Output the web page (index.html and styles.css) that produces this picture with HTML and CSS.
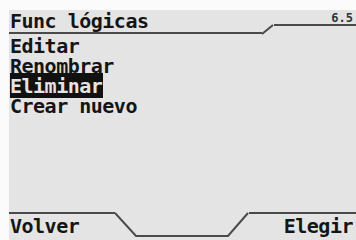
FILE: index.html
```html
<!DOCTYPE html>
<html lang="es">
<head>
    <meta charset="UTF-8">
    <title>Func lógicas</title>
    <link rel="stylesheet" href="styles.css">
</head>
<body>
    <div class="screen">
        <header class="topbar">
            <span class="title">Func lógicas</span>
            <svg class="slant" width="12" height="25" viewBox="0 0 12 25">
                <path d="M0 24 L11 15" stroke="#4a4a4a" stroke-width="2" fill="none"/>
            </svg>
            <span class="version">6.5</span>
        </header>

        <ul class="menu">
            <li>Editar</li>
            <li>Renombrar</li>
            <li><span class="selected">Eliminar</span></li>
            <li>Crear nuevo</li>
        </ul>

        <footer class="softkeys">
            <span class="key key-left">Volver</span>
            <svg class="dip" width="134" height="26" viewBox="0 0 134 26">
                <path d="M0 1 L21 24 L113 24 L133 1" stroke="#4a4a4a" stroke-width="2" fill="none"/>
            </svg>
            <span class="key key-right">Elegir</span>
        </footer>
    </div>
</body>
</html>
```

FILE: styles.css
```css
body {
    margin: 0;
    background-color: #fbfbfb;
    font-family: "DejaVu Sans Mono", monospace;
    font-weight: bold;
    color: #151515;
}
.screen {
    margin: 10px 0 0 9px;
    height: 230px;
    background-color: #e4e4e4;
    display: flex;
    flex-direction: column;
    overflow: hidden;
}
.topbar {
    display: flex;
    align-items: flex-start;
    height: 25px;
}
.title {
    flex: 0 0 252px;
    font-size: 20px;
    letter-spacing: -0.5px;
    line-height: 22px;
    padding-left: 1px;
    border-bottom: 2px solid #4a4a4a;
    white-space: nowrap;
}
.slant {
    flex: none;
    display: block;
}
.version {
    flex: 1;
    font-size: 12px;
    line-height: 12px;
    padding: 2px 3px 0 0;
    text-align: right;
    border-bottom: 2px solid #4a4a4a;
    color: #333;
}
.menu {
    list-style: none;
    margin: 0;
    padding: 1px 0 0 1px;
    font-size: 20px;
    letter-spacing: -0.5px;
    line-height: 20px;
    flex: 1;
}
.selected {
    background-color: #111;
    color: #e4e4e4;
    padding: 1px 1px 0 0;
}
.softkeys {
    display: flex;
    align-items: flex-start;
    height: 28px;
}
.key {
    flex: 1;
    font-size: 20px;
    letter-spacing: -0.5px;
    line-height: 24px;
    border-top: 2px solid #4a4a4a;
    white-space: nowrap;
}
.key-left {
    padding-left: 1px;
}
.key-right {
    text-align: right;
    padding-right: 3px;
}
.dip {
    flex: none;
    display: block;
}
```
